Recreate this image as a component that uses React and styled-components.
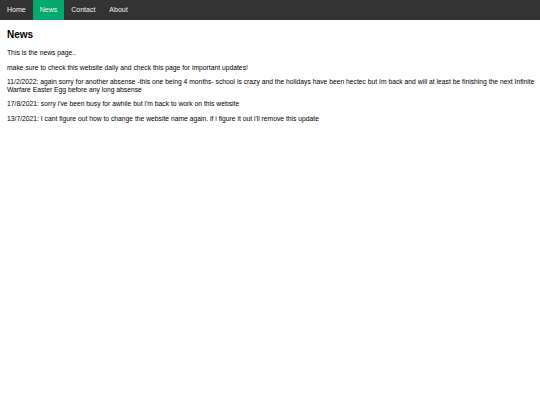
import React from "react";
import styled, { createGlobalStyle } from "styled-components";

const Global = createGlobalStyle`
  html, body { margin: 0; padding: 0; background: #fff; }
  body { font-family: "Liberation Sans", Arial, sans-serif; font-size: 7px; color: #000; }
`;

const TopNav = styled.nav`
  display: flex;
  background: #333;
  overflow: hidden;
`;

const NavLink = styled.a`
  display: block;
  color: #f2f2f2;
  background: ${(p) => (p.$active ? "#04AA6D" : "transparent")};
  text-align: center;
  padding: 6px 7px;
  line-height: 8px;
  font-size: 7px;
  text-decoration: none;
`;

const Main = styled.main`
  padding: 0 3px 0 7px;
`;

const Heading = styled.h2`
  font-size: 10px;
  line-height: 12px;
  font-weight: bold;
  margin: 9px 0 8px;
`;

const Para = styled.p`
  margin: 7px 0;
  font-size: 6.75px;
  line-height: 7.5px;
`;

export default function App() {
  return (
    <>
      <Global />
      <TopNav>
        <NavLink href="#">Home</NavLink>
        <NavLink href="#" $active>News</NavLink>
        <NavLink href="#">Contact</NavLink>
        <NavLink href="#">About</NavLink>
      </TopNav>
      <Main>
        <Heading>News</Heading>
        <Para>This is the news page..</Para>
        <Para>make sure to check this website daily and check this page for important updates!</Para>
        <Para>
          11/2/2022: again sorry for another absense -this one being 4 months- school is crazy and the holidays have been hectec but Im back and will at least be finishing the next Infinite Warfare Easter Egg before any long absense
        </Para>
        <Para>17/8/2021: sorry i've been busy for awhile but i'm back to work on this website</Para>
        <Para>13/7/2021: I cant figure out how to change the website name again. if i figure it out i'll remove this update</Para>
      </Main>
    </>
  );
}
